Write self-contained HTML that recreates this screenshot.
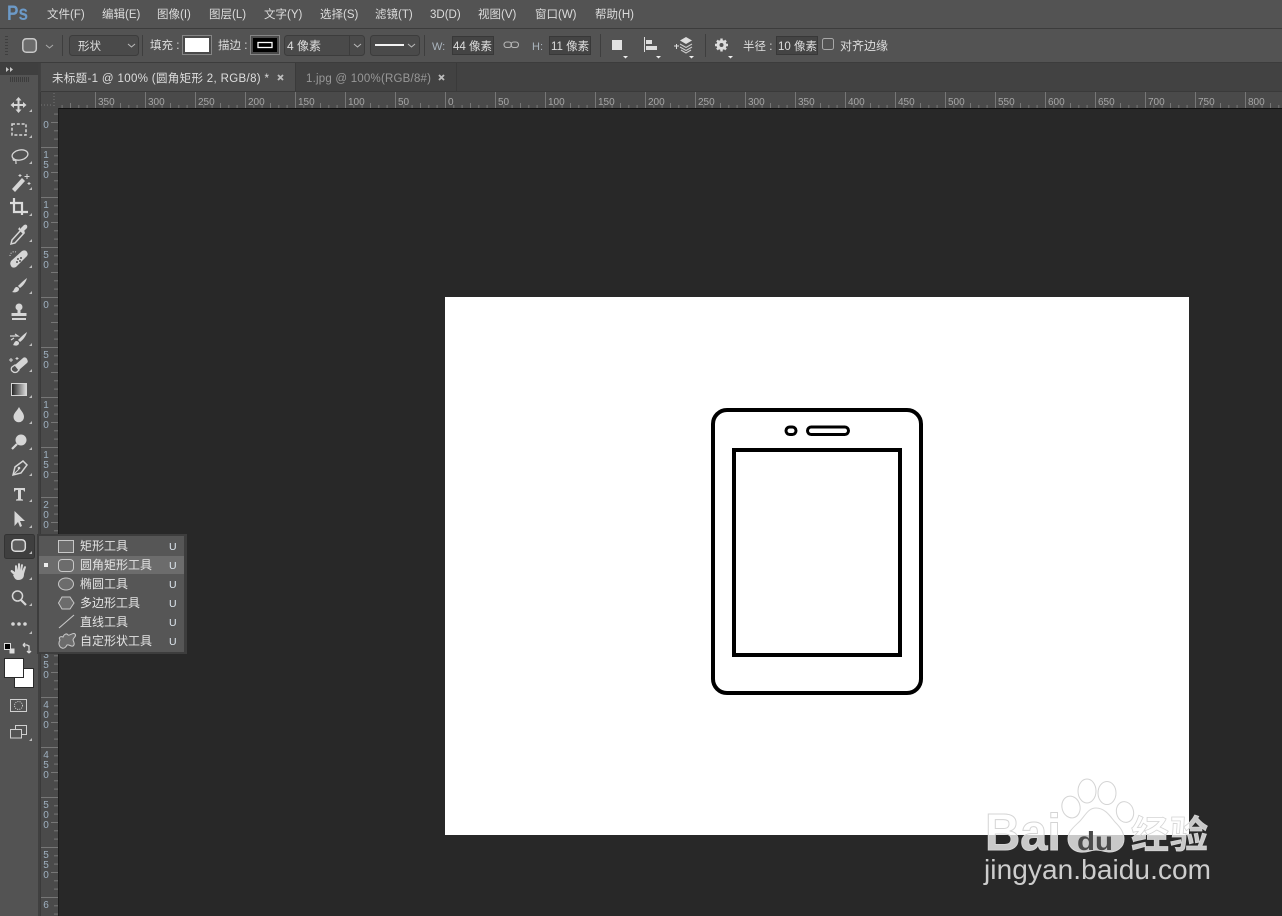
<!DOCTYPE html>
<html lang="zh"><head><meta charset="utf-8"><title>Photoshop</title>
<style>
html,body{margin:0;padding:0;background:#282828}
#p{position:relative;width:1282px;height:916px;overflow:hidden;background:#282828}
svg{position:absolute;left:0;top:0}
text{font-family:"Liberation Sans","Noto Sans CJK SC",sans-serif;}
.m{font-size:11.5px;fill:#dcdcdc}
.o{font-size:11.5px;fill:#dedede}
.r{font-size:10px;fill:#a6a6a6;font-family:"Liberation Sans",sans-serif}
.v{font-size:10px;fill:#9eb0c0;text-anchor:middle}
.f{font-size:12px;fill:#e4e4e4}
.u{font-size:10.5px;fill:#dfe8f0}
.ico{fill:#d6d6d6;stroke:none}
.ln{fill:none;stroke:#d6d6d6;stroke-width:1.6}
</style></head><body><div id="p">
<svg width="1282" height="916" viewBox="0 0 1282 916" xmlns="http://www.w3.org/2000/svg">
<defs>
<pattern id="ht" x="445" y="92" width="50" height="16" patternUnits="userSpaceOnUse">
<rect x="0" y="0" width="1" height="16" fill="#767676"/>
<rect x="8.3" y="13" width="1" height="3" fill="#767676"/><rect x="16.6" y="13" width="1" height="3" fill="#767676"/><rect x="25" y="11" width="1" height="5" fill="#767676"/><rect x="33.3" y="13" width="1" height="3" fill="#767676"/><rect x="41.6" y="13" width="1" height="3" fill="#767676"/>
</pattern>
<pattern id="vt" x="41" y="297" width="17" height="50" patternUnits="userSpaceOnUse">
<rect x="0" y="0" width="17" height="1" fill="#767676"/>
<rect x="13" y="8.3" width="4" height="1" fill="#767676"/><rect x="13" y="16.6" width="4" height="1" fill="#767676"/><rect x="10" y="25" width="7" height="1" fill="#767676"/><rect x="13" y="33.3" width="4" height="1" fill="#767676"/><rect x="13" y="41.6" width="4" height="1" fill="#767676"/>
</pattern>
</defs>

<!-- bars -->
<rect x="0" y="0" width="1282" height="28" fill="#535353"/>
<rect x="0" y="28" width="1282" height="1" fill="#3c3c3c"/>
<rect x="0" y="29" width="1282" height="33" fill="#535353"/>
<rect x="0" y="62" width="1282" height="1" fill="#3c3c3c"/>
<rect x="0" y="63" width="1282" height="29" fill="#424242"/>

<!-- logo + menu -->
<text x="7" y="20" textLength="21" lengthAdjust="spacingAndGlyphs" style="font-size:21px;font-weight:bold;fill:#6c9ac8">Ps</text>
<text class="m" x="47" y="18">文件(F)</text>
<text class="m" x="102" y="18">编辑(E)</text>
<text class="m" x="157" y="18">图像(I)</text>
<text class="m" x="209" y="18">图层(L)</text>
<text class="m" x="264" y="18">文字(Y)</text>
<text class="m" x="320" y="18">选择(S)</text>
<text class="m" x="375" y="18">滤镜(T)</text>
<text class="m" x="430" y="18">3D(D)</text>
<text class="m" x="478" y="18">视图(V)</text>
<text class="m" x="535" y="18">窗口(W)</text>
<text class="m" x="595" y="18">帮助(H)</text>

<!-- options bar -->
<g fill="#3f3f3f"><rect x="5" y="36" width="3" height="1"/><rect x="5" y="39" width="3" height="1"/><rect x="5" y="42" width="3" height="1"/><rect x="5" y="45" width="3" height="1"/><rect x="5" y="48" width="3" height="1"/><rect x="5" y="51" width="3" height="1"/><rect x="5" y="54" width="3" height="1"/></g>
<rect x="22.800" y="38.800" width="13.500" height="13.500" rx="3.500" fill="#6b6b6b" stroke="#c8c8c8" stroke-width="1.500"/>
<path d="M46 45l3.500 3 3.500-3" fill="none" stroke="#aaa" stroke-width="1"/>
<g fill="#3e3e3e"><rect x="62" y="35" width="1" height="21"/><rect x="142" y="35" width="1" height="21"/><rect x="424" y="35" width="1" height="21"/><rect x="600" y="34" width="1" height="23"/><rect x="705" y="34" width="1" height="23"/></g>
<rect x="69.500" y="35.500" width="69" height="20" rx="3" fill="#4a4a4a" stroke="#3c3c3c"/>
<text class="o" x="78" y="50">形状</text>
<path d="M128 44l3.500 3 3.500-3" fill="none" stroke="#bbb" stroke-width="1"/>
<text class="o" x="150" y="49">填充 :</text>
<rect x="182.500" y="35.500" width="29" height="19" fill="#4a4a4a" stroke="#868686"/>
<rect x="185" y="38" width="24" height="14" fill="#fff"/>
<text class="o" x="218" y="49">描边 :</text>
<rect x="250.500" y="35.500" width="29" height="19" fill="#4a4a4a" stroke="#868686"/>
<rect x="253" y="38" width="24" height="14" fill="#000"/>
<rect x="258" y="42.500" width="14" height="5" fill="none" stroke="#fff" stroke-width="1.300"/>
<rect x="284.500" y="35.500" width="80" height="20" rx="3" fill="#4a4a4a" stroke="#3c3c3c"/>
<rect x="349" y="36" width="1" height="19" fill="#3c3c3c"/>
<text class="o" x="287" y="50" style="font-size:12px">4 像素</text>
<path d="M354 44l3.500 3 3.500-3" fill="none" stroke="#bbb" stroke-width="1"/>
<rect x="370.500" y="35.500" width="49" height="20" rx="3" fill="#4a4a4a" stroke="#3c3c3c"/>
<rect x="375" y="44" width="29" height="2" fill="#f2f2f2"/>
<path d="M408 44l3.500 3 3.500-3" fill="none" stroke="#bbb" stroke-width="1"/>
<text x="432" y="50" style="font-size:11px;fill:#aab4bd">W:</text>
<rect x="452.500" y="36.500" width="41" height="18" fill="#444" stroke="#383838"/>
<text class="o" x="453" y="50">44 像素</text>
<g fill="none" stroke="#b4b4b4" stroke-width="1.100"><rect x="504" y="42" width="7.500" height="5.500" rx="2.700"/><rect x="511" y="42" width="7.500" height="5.500" rx="2.700"/></g>
<text x="532" y="50" style="font-size:11px;fill:#aab4bd">H:</text>
<rect x="549.500" y="36.500" width="41" height="18" fill="#444" stroke="#383838"/>
<text class="o" x="551" y="50">11 像素</text>
<rect x="612" y="40" width="10" height="10" fill="#e2e2e2"/>
<path d="M623 56h5l-2.500 2.500z" fill="#eee"/>
<rect x="644" y="37" width="1" height="15" fill="#ddd"/><rect x="646" y="40" width="6" height="4" fill="#ddd"/><rect x="646" y="46" width="11" height="4" fill="#ddd"/>
<path d="M656 56h5l-2.500 2.500z" fill="#eee"/>
<path d="M674 46h5M676.500 44v5" stroke="#ddd" stroke-width="1" fill="none"/>
<path d="M686 37l6 3.500-6 3.500-6-3.500z" fill="#ddd"/>
<path d="M680 44l6 3.500 6-3.500M680 47l6 3.500 6-3.500M681 50l5 3 5-3" fill="none" stroke="#ccc" stroke-width="1.100"/>
<path d="M689 56h5l-2.500 2.500z" fill="#eee"/>
<path d="M721.500 38.500v13M715 45h13M717 40.500l9 9M726 40.500l-9 9" stroke="#dcdcdc" stroke-width="2.400"/>
<circle cx="721.500" cy="45" r="5" fill="#dcdcdc"/>
<circle cx="721.500" cy="45" r="2" fill="#535353"/>
<path d="M728 56h5l-2.500 2.500z" fill="#eee"/>
<text class="o" x="743" y="50">半径 :</text>
<rect x="776.500" y="36.500" width="41" height="18" fill="#444" stroke="#383838"/>
<text class="o" x="778" y="50">10 像素</text>
<rect x="822.500" y="38.500" width="11" height="11" rx="2" fill="#535353" stroke="#a8a8a8"/>
<text class="o" x="840" y="50" style="font-size:12px">对齐边缘</text>

<!-- tabs -->
<rect x="41" y="63" width="254" height="29" fill="#4e4e4e"/>
<rect x="295" y="63" width="1" height="29" fill="#3a3a3a"/>
<rect x="456" y="63" width="1" height="29" fill="#3a3a3a"/>
<text x="52" y="82" textLength="217" style="font-size:11.500px;fill:#dedede">未标题-1 @ 100% (圆角矩形 2, RGB/8) *</text>
<path d="M278 75l5 5M283 75l-5 5" stroke="#bdbdbd" stroke-width="1.800"/>
<text x="306" y="82" textLength="125" style="font-size:11.500px;fill:#989898">1.jpg @ 100%(RGB/8#)</text>
<path d="M439 75l5 5M444 75l-5 5" stroke="#bdbdbd" stroke-width="1.800"/>

<!-- rulers -->
<rect x="41" y="92" width="1241" height="16" fill="#4a4a4a"/>
<rect x="41" y="91" width="1241" height="1" fill="#3a3a3a"/>
<rect x="41" y="92" width="17" height="824" fill="#4a4a4a"/>
<rect x="58" y="92" width="1224" height="16" fill="url(#ht)"/>
<rect x="41" y="108" width="17" height="808" fill="url(#vt)"/>
<rect x="58" y="108" width="1224" height="1" fill="#111"/>
<rect x="58" y="108" width="1" height="808" fill="#1c1c1c"/>
<path d="M41 105h12M54 93v13" stroke="#777" stroke-dasharray="1 2" fill="none"/>
<rect x="40" y="92" width="1" height="824" fill="#3a3a3a"/>
<g class="r">
<text class="r" x="98" y="105">350</text><text class="r" x="148" y="105">300</text><text class="r" x="198" y="105">250</text><text class="r" x="248" y="105">200</text><text class="r" x="298" y="105">150</text><text class="r" x="348" y="105">100</text><text class="r" x="398" y="105">50</text><text class="r" x="448" y="105">0</text>
<text class="r" x="498" y="105">50</text><text class="r" x="548" y="105">100</text><text class="r" x="598" y="105">150</text><text class="r" x="648" y="105">200</text><text class="r" x="698" y="105">250</text><text class="r" x="748" y="105">300</text><text class="r" x="798" y="105">350</text><text class="r" x="848" y="105">400</text><text class="r" x="898" y="105">450</text><text class="r" x="948" y="105">500</text><text class="r" x="998" y="105">550</text><text class="r" x="1048" y="105">600</text><text class="r" x="1098" y="105">650</text><text class="r" x="1148" y="105">700</text><text class="r" x="1198" y="105">750</text><text class="r" x="1248" y="105">800</text>
</g>
<g>
<text class="v" x="46" y="128">0</text>
<text class="v" x="46" y="158">1</text><text class="v" x="46" y="168">5</text><text class="v" x="46" y="178">0</text>
<text class="v" x="46" y="208">1</text><text class="v" x="46" y="218">0</text><text class="v" x="46" y="228">0</text>
<text class="v" x="46" y="258">5</text><text class="v" x="46" y="268">0</text>
<text class="v" x="46" y="308">0</text>
<text class="v" x="46" y="358">5</text><text class="v" x="46" y="368">0</text>
<text class="v" x="46" y="408">1</text><text class="v" x="46" y="418">0</text><text class="v" x="46" y="428">0</text>
<text class="v" x="46" y="458">1</text><text class="v" x="46" y="468">5</text><text class="v" x="46" y="478">0</text>
<text class="v" x="46" y="508">2</text><text class="v" x="46" y="518">0</text><text class="v" x="46" y="528">0</text>
<text class="v" x="46" y="558">2</text><text class="v" x="46" y="568">5</text><text class="v" x="46" y="578">0</text>
<text class="v" x="46" y="608">3</text><text class="v" x="46" y="618">0</text><text class="v" x="46" y="628">0</text>
<text class="v" x="46" y="658">3</text><text class="v" x="46" y="668">5</text><text class="v" x="46" y="678">0</text>
<text class="v" x="46" y="708">4</text><text class="v" x="46" y="718">0</text><text class="v" x="46" y="728">0</text>
<text class="v" x="46" y="758">4</text><text class="v" x="46" y="768">5</text><text class="v" x="46" y="778">0</text>
<text class="v" x="46" y="808">5</text><text class="v" x="46" y="818">0</text><text class="v" x="46" y="828">0</text>
<text class="v" x="46" y="858">5</text><text class="v" x="46" y="868">5</text><text class="v" x="46" y="878">0</text>
<text class="v" x="46" y="908">6</text>
</g>

<!-- toolbar -->
<rect x="0" y="63" width="38" height="853" fill="#535353"/>
<rect x="0" y="63" width="38" height="12" fill="#3f3f3f"/>
<rect x="38" y="63" width="2" height="853" fill="#404040"/>
<path d="M6 67l3 2.500-3 2.500zM10 67l3 2.500-3 2.500z" fill="#c8c8c8"/>
<g fill="#3c3c3c"><rect x="10" y="77" width="1" height="5"/><rect x="12" y="77" width="1" height="5"/><rect x="14" y="77" width="1" height="5"/><rect x="16" y="77" width="1" height="5"/><rect x="18" y="77" width="1" height="5"/><rect x="20" y="77" width="1" height="5"/><rect x="22" y="77" width="1" height="5"/><rect x="24" y="77" width="1" height="5"/><rect x="26" y="77" width="1" height="5"/><rect x="28" y="77" width="1" height="5"/></g>

<!-- move -->
<path d="M18.500 97l3 3.500h-2v3.500h3.500v-2l3.500 3-3.500 3v-2h-3.500v3.500h2l-3 3.500-3-3.500h2v-3.500h-3.500v2l-3.500-3 3.500-3v2h3.500v-3.500h-2z" class="ico"/>
<!-- marquee -->
<rect x="12" y="124" width="14" height="11" fill="none" stroke="#d6d6d6" stroke-width="1.500" stroke-dasharray="3 1.800"/>
<!-- lasso -->
<ellipse cx="20" cy="155" rx="8" ry="5" fill="none" stroke="#d6d6d6" stroke-width="1.300" transform="rotate(-12 20 155)"/>
<path d="M14 158c-2 2 0 3 1 2s1 3 1 4" fill="none" stroke="#d6d6d6" stroke-width="1.200"/>
<!-- wand -->
<path d="M12 189l10-11 3 3-10 11z" class="ico"/>
<path d="M27 174v5M24.500 176.500h5M20 174v3M18.500 175.500h3M29 182v3M27.500 183.500h3" stroke="#d6d6d6" stroke-width="1"/>
<!-- crop -->
<path d="M14 200v12h12M10 203h12v12M14 198v2M26 212h2" fill="none" stroke="#dcdcdc" stroke-width="2.200"/>
<!-- eyedropper -->
<path d="M12 240l9-10 3 3-9 10-4 1z" fill="none" stroke="#d6d6d6" stroke-width="1.500"/>
<path d="M20 229l4-4c2-1 4 0 3 3l-3 3 1 1-2 2-5-5 2-2z" class="ico"/>
<!-- heal -->
<path d="M11 261l11-10c2-1 4-1 5 1s1 3-1 5l-10 10c-2 1-4 1-5-1s-1-3 0-5z" class="ico"/>
<circle cx="18" cy="259" r="1" fill="#535353"/><circle cx="21" cy="258" r="1" fill="#535353"/><circle cx="17" cy="262" r="1" fill="#535353"/><circle cx="20" cy="261" r="1" fill="#535353"/>
<path d="M10 256c0-3 3-5 6-4" fill="none" stroke="#d6d6d6" stroke-dasharray="1 1.500"/>
<!-- brush -->
<path d="M27 278c-3 2-7 6-9 8l2 2c3-2 6-6 7-10z" class="ico"/>
<path d="M16 287c2 0 3 1 3 2 0 3-4 4-7 3 2-1 2-4 4-5z" class="ico"/>
<!-- stamp -->
<circle cx="19" cy="307" r="3.500" class="ico"/>
<path d="M17.500 309h3v4h6v3h-15v-3h6z" class="ico"/><rect x="12" y="318" width="14" height="2" class="ico"/>
<!-- history brush -->
<path d="M27 332c-3 2-7 6-9 8l2 2c3-2 6-6 7-10z" class="ico"/>
<path d="M16 341c2 0 3 1 3 2 0 3-4 3-6 2 1-1 1-3 3-4z" class="ico"/>
<path d="M10 336h8l-3-2M11 340l3-2" fill="none" stroke="#d6d6d6" stroke-width="1.200"/>
<!-- eraser -->
<path d="M15 365l8-7c1-1 3-1 4 1s1 3 0 4l-8 7z" class="ico"/>
<path d="M15 365l4 5-2 2c-2 1-4 0-5-1s-1-3 0-4z" fill="#535353" stroke="#d6d6d6" stroke-width="1.300"/>
<path d="M11 358v4M9 360h4M17 357v3M15.500 358.500h3" stroke="#d6d6d6"/>
<!-- gradient -->
<linearGradient id="g1"><stop offset="0" stop-color="#222"/><stop offset="1" stop-color="#ddd"/></linearGradient>
<rect x="11.500" y="383.500" width="15" height="12" fill="url(#g1)" stroke="#d6d6d6"/>
<!-- drop -->
<path d="M19 407c2 4 5 6 5 10a5.200 5.200 0 0 1-10.500 0c0-4 3.500-6 5.500-10z" class="ico"/>
<!-- dodge -->
<circle cx="21" cy="440" r="5.500" class="ico"/><path d="M17 444l-5 5" stroke="#d6d6d6" stroke-width="2.200"/>
<!-- pen -->
<path d="M13 475l2-8 8-6 4 4-6 8z" fill="none" stroke="#d6d6d6" stroke-width="1.500"/><path d="M13 475l6-6" stroke="#d6d6d6"/><circle cx="19" cy="468" r="1.300" class="ico"/>
<!-- type -->
<path d="M14 488h11v3.500h-1c0-1-.500-1.500-1.500-1.500h-1.500v9l2 .6v1h-7v-1l2-.6v-9h-1.500c-1 0-1.500.5-1.500 1.500h-1z" class="ico"/>
<!-- path select -->
<path d="M14.500 511v15l3.500-4 2 5 2-1-2-5h5z" class="ico"/>
<!-- active shape -->
<rect x="4.500" y="534.500" width="30" height="24" rx="2" fill="#3f3f3f" stroke="#333"/>
<rect x="11.800" y="539.800" width="13.500" height="11.500" rx="3.500" fill="#5c5c5c" stroke="#dcdcdc" stroke-width="1.500"/>
<!-- hand -->
<path d="M14 575l-3-3c-1-1 0-2 1-2l3 2v-6c0-1 2-1 2 0l1 4v-6c0-1 2-1 2 0v6l1-5c0-1 2-1 2 0l-1 6 2-4c0-1 2-1 2 0l-2 7c0 3-1 6-6 6-3 0-4-3-5-5z" class="ico"/>
<!-- zoom -->
<circle cx="17.500" cy="596" r="5" fill="none" stroke="#d6d6d6" stroke-width="1.500"/><path d="M21 600l5 5" stroke="#d6d6d6" stroke-width="2.200"/>
<!-- dots -->
<circle cx="13" cy="624" r="1.800" class="ico"/><circle cx="19" cy="624" r="1.800" class="ico"/><circle cx="25" cy="624" r="1.800" class="ico"/>
<!-- corner marks -->
<g fill="#bdbdbd"><path d="M32 109v3h-3zM32 135v3h-3zM32 161v3h-3zM32 187v3h-3zM32 213v3h-3zM32 239v3h-3zM32 265v3h-3zM32 291v3h-3zM32 343v3h-3zM32 369v3h-3zM32 395v3h-3zM32 421v3h-3zM32 447v3h-3zM32 473v3h-3zM32 499v3h-3zM32 525v3h-3zM32 551v3h-3zM32 577v3h-3zM32 603v3h-3zM32 631v3h-3zM32 738v3h-3z"/></g>
<!-- colors -->
<rect x="9.500" y="648.500" width="5" height="5" fill="#ddd"/><rect x="4.500" y="643.500" width="6" height="6" fill="#000" stroke="#ddd"/>
<path d="M23 645h4l2 1v6M23 645l2-2M23 645l2 2M29 653l-2-2M29 653l2-2" fill="none" stroke="#d8d8d8" stroke-width="1.300"/>
<rect x="14.500" y="668.500" width="19" height="19" fill="#fff" stroke="#2a2a2a"/>
<rect x="4.500" y="658.500" width="19" height="19" fill="#fff" stroke="#2a2a2a"/>
<rect x="10.500" y="699.500" width="16" height="12" fill="none" stroke="#d0d0d0"/><circle cx="18.500" cy="705.500" r="4" fill="none" stroke="#d0d0d0" stroke-dasharray="1 1.200"/>
<rect x="15.500" y="725.500" width="11" height="9" fill="none" stroke="#d0d0d0"/><rect x="10.500" y="729.500" width="11" height="8.500" fill="#535353" stroke="#d0d0d0"/>

<!-- flyout -->
<rect x="37" y="534" width="150" height="120" fill="#3d3d3d"/>
<rect x="39" y="536" width="145" height="116" fill="#565656"/>
<rect x="39" y="556" width="145" height="18" fill="#6c6c6c"/>
<rect x="44" y="563" width="4" height="4" fill="#eee"/>
<rect x="58.500" y="540.500" width="15" height="12" fill="#6c6c6c" stroke="#c8c8c8"/>
<rect x="58.500" y="559.500" width="15" height="12" rx="3.500" fill="#6c6c6c" stroke="#c8c8c8"/>
<ellipse cx="66" cy="584" rx="7.500" ry="6" fill="#6c6c6c" stroke="#c8c8c8"/>
<path d="M62 597h8l4 6-4 6h-8l-3.500-6z" fill="#6c6c6c" stroke="#c8c8c8"/>
<path d="M59 628l15-13" stroke="#c8c8c8" stroke-width="1.100"/>
<path d="M60 640c-2-3 1-4 3-3 1-3 4-4 5-2 2 1 5-3 7-1 2 2-2 4-2 6 1 2 2 5 0 6-2 1-4-2-6-1-1 2-3 4-5 3-3-1-4-5-2-8z" fill="#6c6c6c" stroke="#c8c8c8"/>
<g class="f">
<text class="f" x="80" y="550">矩形工具</text>
<text class="f" x="80" y="569">圆角矩形工具</text>
<text class="f" x="80" y="588">椭圆工具</text>
<text class="f" x="80" y="607">多边形工具</text>
<text class="f" x="80" y="626">直线工具</text>
<text class="f" x="80" y="645">自定形状工具</text>
</g>
<text class="u" x="169" y="550">U</text><text class="u" x="169" y="569">U</text><text class="u" x="169" y="588">U</text><text class="u" x="169" y="607">U</text><text class="u" x="169" y="626">U</text><text class="u" x="169" y="645">U</text>

<!-- document -->
<rect x="445" y="297" width="744" height="538" fill="#fff"/>
<rect x="713" y="410" width="208" height="283" rx="14" fill="none" stroke="#000" stroke-width="4"/>
<rect x="734" y="450" width="166" height="205" fill="none" stroke="#000" stroke-width="4"/>
<rect x="786" y="427" width="10" height="7.500" rx="3.700" fill="none" stroke="#000" stroke-width="3"/>
<rect x="807.500" y="427" width="41" height="7.500" rx="3.700" fill="none" stroke="#000" stroke-width="3"/>

<!-- watermark -->
<g stroke="#d4d4d4" stroke-width="1" fill="rgba(255,255,255,.02)">
<ellipse cx="1087" cy="791" rx="9" ry="12"/><ellipse cx="1107" cy="793" rx="9" ry="11.500"/><ellipse cx="1071" cy="807" rx="9" ry="11" transform="rotate(-15 1071 807)"/><ellipse cx="1125" cy="812" rx="8.500" ry="10.500" transform="rotate(-15 1125 812)"/>
</g>
<path d="M1096 808c9 0 14 8 19 14 5 5 9 10 9 17 0 9-8 13-14 13-5 0-9-2-14-2s-9 3-16 2c-7-1-12-6-12-13 0-8 6-12 12-18 5-5 8-13 16-13z" fill="rgba(255,255,255,.75)" stroke="#d8d8d8"/>
<text x="985" y="850" textLength="76" lengthAdjust="spacingAndGlyphs" style="font-size:52px;font-weight:bold;fill:rgba(255,255,255,.75);stroke:#d4d4d4;stroke-width:1">Bai</text>
<text x="1077" y="850" textLength="36" lengthAdjust="spacingAndGlyphs" style="font-size:26px;font-weight:bold;fill:#4a4a4a">du</text>
<text x="1131" y="848" textLength="77" style="font-size:38px;font-weight:bold;fill:rgba(255,255,255,.75);stroke:#d4d4d4;stroke-width:.8">经验</text>
<text x="984" y="879" textLength="227" style="font-size:28px;fill:#cdcdcd">jingyan.baidu.com</text>
</svg>
</div></body></html>
